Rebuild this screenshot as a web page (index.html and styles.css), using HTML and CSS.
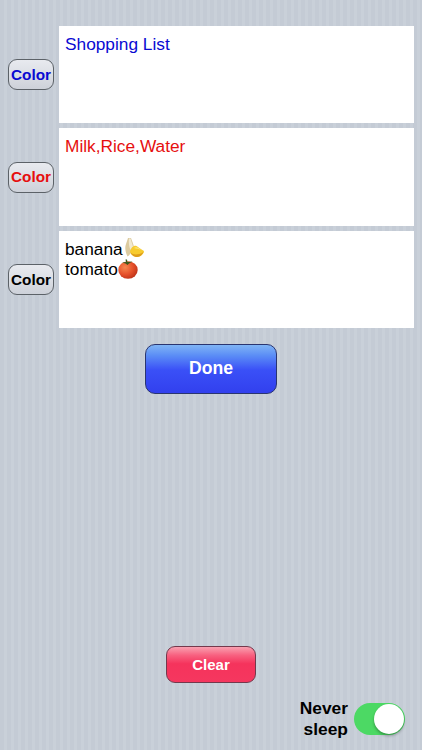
FILE: index.html
```html
<!DOCTYPE html>
<html lang="en">
<head>
<meta charset="utf-8">
<title>Notes</title>
<link rel="stylesheet" href="styles.css">
</head>
<body>
<main class="screen">
  <section class="rows">
    <div class="row row-a">
      <button class="color-btn blue">Color</button>
      <div class="note blue">Shopping List</div>
    </div>
    <div class="row row-b">
      <button class="color-btn red">Color</button>
      <div class="note red">Milk,Rice,Water</div>
    </div>
    <div class="row row-a">
      <button class="color-btn black">Color</button>
      <div class="note black">
        <div class="line">banana<svg class="emoji banana" viewBox="0 0 20 20" aria-hidden="true">
          <path d="M4 0 L7 0 C8 3 9.5 6 10 9 L7.5 14 C6.5 16 5 17.5 3.5 18.5 C1.5 14 .5 10 2 6 Z" fill="#dccba0"/>
          <path d="M5 .5 L6.5 .5 C7.5 4 8.5 6 9 9 L6.5 12 C5 9 4.5 5 5 .5 Z" fill="#f1e9d0"/>
          <path d="M6 13.5 C7 9.5 10 7 12.5 8 C14.5 9 16.5 11 20 13 C20 16 16 19.5 12 19 C9 18.5 7 16.5 6 13.5 Z" fill="#f7cb2e"/>
          <path d="M6.5 14.5 C9 17 14 17.5 19.5 14 C18 17.5 15 19.5 12 19 C9.5 18.5 7.5 17 6.5 14.5 Z" fill="#dd9d1b"/>
          <path d="M10 10 C12 8.5 14.5 9.5 17 12 C14.5 11 12.5 10.5 10 10 Z" fill="#fce67a"/>
        </svg></div>
        <div class="line">tomato<svg class="emoji tomato" viewBox="0 0 20 20" aria-hidden="true">
          <defs>
            <radialGradient id="tom" cx="35%" cy="35%" r="75%">
              <stop offset="0" stop-color="#f6884f"/>
              <stop offset=".55" stop-color="#e5502a"/>
              <stop offset="1" stop-color="#b92f17"/>
            </radialGradient>
          </defs>
          <ellipse cx="10" cy="11" rx="9.7" ry="8.8" fill="url(#tom)"/>
          <path d="M7.5 .5 L9 .5 L9.5 3 L14.5 2.5 L11 4.5 L9.5 6 L7.5 4.5 L4 3.5 L8 3 Z" fill="#3d5a1c"/>
        </svg></div>
      </div>
    </div>
  </section>

  <div class="done-wrap">
    <button class="action done">Done</button>
  </div>

  <footer class="footer">
    <button class="action clear">Clear</button>
    <div class="sleep">
      <span class="sleep-label">Never<br>sleep</span>
      <span class="switch"><span class="knob"></span></span>
    </div>
  </footer>
</main>
</body>
</html>
```
FILE: styles.css
```css
* { box-sizing: border-box; }

html, body {
  margin: 0;
  padding: 0;
}

body {
  width: 422px;
  height: 750px;
  overflow: hidden;
  font-family: "Liberation Sans", Arial, sans-serif;
}

.screen {
  width: 422px;
  height: 750px;
  display: flex;
  flex-direction: column;
  padding-top: 26px;
  background-color: #c6cdd6;
  background-image: repeating-linear-gradient(90deg,
    #c4cbd5 0, #c4cbd5 4px,
    #c9d0d9 4px, #c9d0d9 7px);
}

.rows {
  display: flex;
  flex-direction: column;
  gap: 5px;
  padding: 0 8px;
}

.row {
  display: flex;
  align-items: center;
  gap: 5px;
}

.row-a { height: 97px; }
.row-b { height: 98px; }

.color-btn {
  width: 46px;
  height: 31px;
  padding: 0;
  border: 1px solid #5c6268;
  border-radius: 9px;
  background: linear-gradient(#e8eaef 0%, #dde0e6 45%, #cdd1d9 100%);
  font: bold 15.3px "Liberation Sans", Arial, sans-serif;
}

.note {
  flex: 1;
  height: 100%;
  padding: 8px 6px;
  background: #fff;
  font-size: 17.3px;
  line-height: 20px;
}

.line {
  display: flex;
  align-items: center;
  height: 20px;
}

.blue { color: #0a0ad2; }
.red { color: #e60f0f; }
.black { color: #000; }

.emoji {
  display: block;
  width: 20px;
  height: 20px;
  flex: none;
}

.banana {
  margin-left: 1px;
  margin-top: -2px;
}

.done-wrap {
  display: flex;
  justify-content: center;
  margin-top: 16px;
}

.action {
  color: #fff;
  font-family: "Liberation Sans", Arial, sans-serif;
  font-weight: bold;
}

.done {
  width: 132px;
  height: 50px;
  padding: 0 0 2px;
  border: 1px solid #2a3570;
  border-radius: 10px;
  background: linear-gradient(#7fb4f5 0%, #5b8df6 22%, #3a50f7 52%, #3240ee 100%);
  font-size: 17.6px;
}

.footer {
  margin-top: auto;
  display: flex;
  flex-direction: column;
  align-items: center;
  padding-bottom: 11px;
}

.clear {
  width: 90px;
  height: 37px;
  padding: 0 0 1px;
  border: 1px solid #74384c;
  border-radius: 9px;
  background: linear-gradient(#f9a0b0 0%, #f8607f 24%, #f5335c 48%, #f5375f 100%);
  font-size: 15px;
}

.sleep {
  align-self: flex-end;
  display: flex;
  align-items: center;
  gap: 6px;
  margin-top: 15px;
  padding-right: 17px;
}

.sleep-label {
  color: #000;
  font-size: 17.4px;
  font-weight: bold;
  line-height: 20.5px;
  text-align: right;
}

.switch {
  display: flex;
  justify-content: flex-end;
  width: 51px;
  height: 32px;
  padding: 1px;
  border-radius: 16px;
  background: #4cd964;
}

.knob {
  width: 30px;
  height: 30px;
  border-radius: 50%;
  background: #fff;
  box-shadow: 0 2px 3px rgba(0, 0, 0, .3);
}
```
